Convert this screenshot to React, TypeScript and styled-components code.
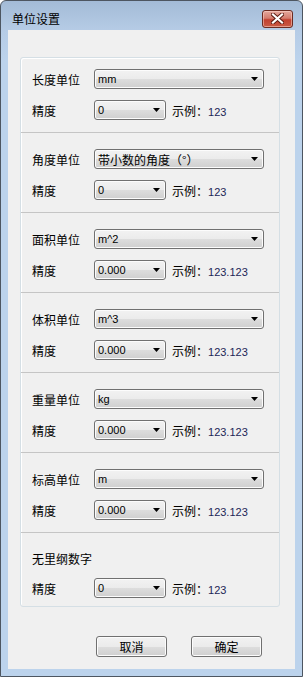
import styled, {createGlobalStyle} from "styled-components";

const GlobalStyle = createGlobalStyle`
    html, body {
        margin: 0;
        padding: 0;
        background: #ffffff;
    }
    * {
        box-sizing: border-box;
    }
`

const cjk = `"Noto Sans CJK SC", "Noto Sans", sans-serif`
const latin = `"Liberation Sans", "Noto Sans CJK SC", sans-serif`

type UnitSection = {
    label: string
    value: string
    precision: string
    sample: string
    cjkValue?: boolean
}

const sections: UnitSection[] = [
    {label: "长度单位", value: "mm", precision: "0", sample: "123"},
    {label: "角度单位", value: "带小数的角度（°）", precision: "0", sample: "123", cjkValue: true},
    {label: "面积单位", value: "m^2", precision: "0.000", sample: "123.123"},
    {label: "体积单位", value: "m^3", precision: "0.000", sample: "123.123"},
    {label: "重量单位", value: "kg", precision: "0.000", sample: "123.123"},
    {label: "标高单位", value: "m", precision: "0.000", sample: "123.123"},
]

const Arrow = () => (
    <svg width="7" height="4" viewBox="0 0 7 4">
        <path d="M0 0 H7 L3.5 4 Z" fill="#000"/>
    </svg>
)

const CloseGlyph = () => (
    <svg width="13" height="11" viewBox="0 0 13 11">
        <path d="M2 1.5 L11 9.5 M11 1.5 L2 9.5" stroke="#5a1a12" strokeWidth="4" strokeLinecap="square"/>
        <path d="M2 1.5 L11 9.5 M11 1.5 L2 9.5" stroke="#ffffff" strokeWidth="2.2" strokeLinecap="square"/>
    </svg>
)

const Combo = ({value, width, cjkValue}: { value: string, width: number, cjkValue?: boolean }) => (
    <ComboBox $width={width}>
        <ComboText $cjk={cjkValue}>{value}</ComboText>
        <Arrow/>
    </ComboBox>
)

const PrecisionRow = ({precision, sample}: { precision: string, sample: string }) => (
    <Row>
        <Label>精度</Label>
        <Combo value={precision} width={72}/>
        <Sample>示例：<SampleValue>{sample}</SampleValue></Sample>
    </Row>
)

export default function App() {
    return (
        <>
            <GlobalStyle/>
            <Window>
                <TitleBar>
                    <Title>单位设置</Title>
                    <CloseButton><CloseGlyph/></CloseButton>
                </TitleBar>
                <Client>
                    <GroupBox>
                        {sections.map((s, i) => (
                            <Section key={s.label} $first={i === 0}>
                                <Row>
                                    <Label>{s.label}</Label>
                                    <Combo value={s.value} width={170} cjkValue={s.cjkValue}/>
                                </Row>
                                <PrecisionRow precision={s.precision} sample={s.sample}/>
                            </Section>
                        ))}
                        <LastSection>
                            <Row>
                                <Label>无里纲数字</Label>
                            </Row>
                            <PrecisionRow precision="0" sample="123"/>
                        </LastSection>
                    </GroupBox>
                    <ButtonBar>
                        <Button>取消</Button>
                        <Button>确定</Button>
                    </ButtonBar>
                </Client>
            </Window>
        </>
    )
}

const Window = styled.div`
    width: 303px;
    height: 677px;
    border: 1px solid #4d5661;
    border-radius: 6px 6px 0 0;
    background: linear-gradient(180deg, #a3bbd7 0px, #b6cce6 30px, #bcd3ec 60px, #bcd3ec 100%);
    display: flex;
    flex-direction: column;
`

const TitleBar = styled.div`
    height: 29px;
    padding: 6px 9px 0 11px;
    display: flex;
    align-items: center;
    justify-content: space-between;
`

const Title = styled.div`
    font-family: ${cjk};
    font-size: 12px;
    color: #000;
`

const CloseButton = styled.div`
    width: 31px;
    height: 18px;
    border: 1px solid #6b2b22;
    border-radius: 3px;
    background: linear-gradient(180deg, #e4a89e 0%, #d47c6e 45%, #c2402f 55%, #c95a44 100%);
    box-shadow: inset 0 0 0 1px rgba(255, 220, 210, 0.5);
    display: flex;
    align-items: center;
    justify-content: center;
`

const Client = styled.div`
    flex: 1;
    margin: 0 7px 7px 7px;
    background: #f0f0f0;
    padding: 27px 15px 0 12px;
    display: flex;
    flex-direction: column;
`

const GroupBox = styled.div`
    width: 260px;
    border: 1px solid #d5dfe5;
    border-radius: 3px;
    box-shadow: inset 1px 1px 0 #ffffff;
    display: flex;
    flex-direction: column;
`

const Section = styled.div<{ $first?: boolean }>`
    padding: ${p => p.$first ? "11px" : "16px"} 0 12px 11px;
    border-bottom: 1px solid #c5c5c5;
    display: flex;
    flex-direction: column;
    gap: 11px;
`

const LastSection = styled.div`
    padding: 15px 0 8px 11px;
    display: flex;
    flex-direction: column;
    gap: 10px;
`

const Row = styled.div`
    height: 20px;
    display: flex;
    align-items: center;
`

const Label = styled.div`
    width: 62px;
    font-family: ${cjk};
    font-size: 12px;
    color: #000;
    white-space: nowrap;
`

const ComboBox = styled.div<{ $width: number }>`
    width: ${p => p.$width}px;
    height: 20px;
    border: 1px solid #707070;
    border-radius: 3px;
    background: linear-gradient(180deg, #f2f2f2 0%, #ebebeb 50%, #dddddd 51%, #cfcfcf 100%);
    box-shadow: inset 0 0 0 1px #fcfcfc;
    padding: 0 5px 0 3px;
    display: flex;
    align-items: center;
    justify-content: space-between;
`

const ComboText = styled.span<{ $cjk?: boolean }>`
    font-family: ${p => p.$cjk ? cjk : latin};
    font-size: ${p => p.$cjk ? "12px" : "11px"};
    color: #000;
    white-space: nowrap;
`

const Sample = styled.div`
    margin-left: 6px;
    font-family: ${cjk};
    font-size: 12px;
    color: #000;
    white-space: nowrap;
`

const SampleValue = styled.span`
    font-family: ${latin};
    font-size: 11px;
    color: #1d2657;
`

const ButtonBar = styled.div`
    margin-top: 29px;
    padding-left: 76px;
    display: flex;
    gap: 24px;
`

const Button = styled.div`
    width: 71px;
    height: 21px;
    border: 1px solid #707070;
    border-radius: 3px;
    background: linear-gradient(180deg, #f2f2f2 0%, #ebebeb 50%, #dddddd 51%, #cfcfcf 100%);
    box-shadow: inset 0 0 0 1px #fcfcfc;
    font-family: ${cjk};
    font-size: 12px;
    color: #000;
    display: flex;
    align-items: center;
    justify-content: center;
`
